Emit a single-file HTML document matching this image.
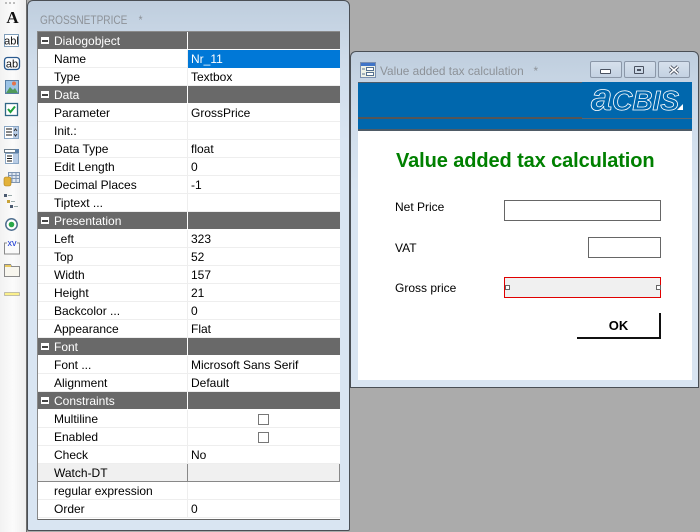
<!DOCTYPE html>
<html><head><meta charset="utf-8">
<style>
html,body{margin:0;padding:0}
body{width:700px;height:532px;overflow:hidden;position:relative;background:#ababab;font-family:"Liberation Sans",sans-serif;font-size:12px;color:#000}
.abs{position:absolute}
#bar{left:0;top:0;width:26px;height:532px;background:linear-gradient(90deg,#f2f2f2,#fbfbfb 50%,#eeeeee)}
#bar2{left:26px;top:0;width:1px;height:532px;background:#6e6e6e}
.win{position:absolute;box-sizing:border-box;border:1px solid #4a4f55;border-radius:6px 6px 0 0;background:linear-gradient(180deg,#bfcede 0,#cfdcea 60px,#d9e5f2 140px,#d9e5f2)}
#w1{left:27px;top:0;width:323px;height:531px;border-radius:6px 6px 2px 2px}
#w2{left:350px;top:51px;width:349px;height:337px;border-radius:6px 6px 0 0}
.ttl{position:absolute;color:#8d9298;font-size:12px;white-space:pre;transform-origin:0 0}
#grid{left:37px;top:32px;width:303px;height:487px;background:#fff;border-top:1px solid #8a8a8a;margin-top:-1px;border-bottom:1px solid #666;box-sizing:content-box}
#gridl{left:37px;top:32px;width:1px;height:488px;background:#888}
.r{position:absolute;left:0;width:303px;height:18px;line-height:17px;box-sizing:border-box;border-bottom:1px solid #eeeeee;white-space:pre}
.r b{font-weight:normal;position:absolute;left:17px;top:1px}
.r i{font-style:normal;position:absolute;left:154px;top:1px;color:#000;height:17px}
.r:after{content:"";position:absolute;left:150px;top:0;width:1px;height:18px;background:#eeeeee}
.h{background:#696969;color:#fff;border-bottom:1px solid #fff}
.h:after{background:#fff}
.h u{position:absolute;left:4px;top:5px;width:8px;height:7px;background:#fff;text-decoration:none}
.h u:after{content:"";position:absolute;left:1px;top:3px;width:6px;height:2px;background:#444}
.sel{position:absolute;left:151px;top:0;width:152px;height:18px;background:#0078d7}
.cb{position:absolute;left:221px;top:4px;width:9px;height:9px;border:1px solid #777;background:#fff}
.wd{background:#f0f0f0}
#client{left:358px;top:82px;width:334px;height:298px;background:#fff}
.btn{position:absolute;top:61px;width:32px;height:17px;box-sizing:border-box;border:1px solid #8b97a8;border-radius:2px;background:linear-gradient(180deg,#d6e0ec,#c4d2e2)}
.tb{position:absolute;box-sizing:border-box;border:1px solid #666;background:#fff}
.lb{position:absolute;left:395px;white-space:pre}
</style></head><body>

<div class="abs" id="bar"></div>
<div class="abs" id="bar2"></div>
<svg class="abs" style="left:0;top:0" width="26" height="310" viewBox="0 0 26 310" xmlns="http://www.w3.org/2000/svg">
<g fill="#bdbdbd"><rect x="5" y="2" width="2" height="2"/><rect x="9" y="2" width="2" height="2"/><rect x="13" y="2" width="2" height="2"/></g>
<text x="12.5" y="23" text-anchor="middle" font-family="Liberation Serif" font-weight="bold" font-size="17" fill="#111">A</text>
<rect x="4.500" y="34.500" width="14" height="12" fill="#fff" stroke="#7f9db9"/>
<text x="11.500" y="44.500" text-anchor="middle" font-size="11" font-family="Liberation Sans" fill="#111">abl</text>
<rect x="4.500" y="57.500" width="15" height="12" rx="3" fill="#fff" stroke="#2a5a8f" stroke-width="1.300"/>
<text x="12" y="67.500" text-anchor="middle" font-size="11" font-family="Liberation Sans" fill="#111">ab</text>
<rect x="5.500" y="80.500" width="13" height="13" fill="#9cc3e6" stroke="#5a7fa5"/>
<path d="M6 93l4-6 3 3 2-2 3 5z" fill="#4f9a5a"/><circle cx="14" cy="83.500" r="2" fill="#e4734a"/>
<rect x="5.500" y="103.500" width="12" height="12" fill="#fff" stroke="#2f6785" stroke-width="1.300"/>
<path d="M8 109l2.500 3 4.500-5.500" fill="none" stroke="#1fa03a" stroke-width="2"/>
<rect x="4.500" y="126.500" width="14" height="12" fill="#fff" stroke="#8aa6c4"/>
<rect x="13" y="127" width="5" height="11" fill="#b9cde6"/>
<path d="M6 129h6M6 132h6M6 135h6" stroke="#111"/>
<path d="M14 131l1.500-2 1.500 2M14 134l1.500 2 1.500-2" stroke="#333" fill="none"/>
<rect x="4.500" y="149.500" width="14" height="3" fill="#fff" stroke="#6d7d8c"/>
<rect x="15" y="149" width="4" height="4" fill="#5b7fa8"/>
<rect x="5.500" y="153.500" width="13" height="10" fill="#fff" stroke="#8aa6c4"/>
<rect x="13" y="154" width="5" height="9" fill="#b9cde6"/>
<path d="M7 156h5M7 158.500h5M7 161h5" stroke="#111"/>
<rect x="8.500" y="172.500" width="11" height="10" fill="#dfe7f1" stroke="#7f95b2"/>
<path d="M8 175.500h12M8 178.500h12M12 172v10M16 172v10" stroke="#7f95b2"/>
<rect x="4" y="177" width="7" height="9" rx="2" fill="#e3b23a" stroke="#a87d1a" stroke-width=".6"/>
<rect x="4" y="194" width="3" height="3" fill="#4a5a70"/><path d="M8 195.500h4" stroke="#9aa"/>
<rect x="7" y="200" width="3" height="3" fill="#c8a33a"/><path d="M11 201.500h4" stroke="#9aa"/>
<rect x="10" y="205" width="3" height="3" fill="#4a5a70"/><path d="M14 206.500h4" stroke="#9aa"/>
<circle cx="11.500" cy="224.500" r="5.700" fill="#fff" stroke="#4f6f8f" stroke-width="1.500"/>
<circle cx="11.500" cy="224.500" r="2.800" fill="#2aa84a"/>
<path d="M7 243h-2.500v11h15v-11h-2.500" fill="#fafafa" stroke="#8a8a8a"/>
<text x="12" y="246" text-anchor="middle" font-size="9" font-family="Liberation Sans" fill="#1030d0">xv</text>
<path d="M4.500 264.500h6l1 2h8v10h-15z" fill="#f8f6ee" stroke="#8a8a8a"/>
<rect x="5" y="265" width="6" height="2" fill="#e8c860"/>
<rect x="4.500" y="292.500" width="15" height="3" fill="#fbf08c" stroke="#8a8a8a" stroke-dasharray="1 1"/>
</svg>

<div class="win" id="w1"></div>
<div class="ttl" style="left:40px;top:13px;transform:scaleX(.84)">GROSSNETPRICE    *</div>

<div class="abs" id="grid">
<div class="r h" style="top:0"><u></u><b>Dialogobject</b></div>
<div class="r" style="top:18px"><div class="sel"></div><b>Name</b><i style="color:#fff">Nr_11</i></div>
<div class="r" style="top:36px"><b>Type</b><i>Textbox</i></div>
<div class="r h" style="top:54px"><u></u><b>Data</b></div>
<div class="r" style="top:72px"><b>Parameter</b><i>GrossPrice</i></div>
<div class="r" style="top:90px"><b>Init.:</b></div>
<div class="r" style="top:108px"><b>Data Type</b><i>float</i></div>
<div class="r" style="top:126px"><b>Edit Length</b><i>0</i></div>
<div class="r" style="top:144px"><b>Decimal Places</b><i>-1</i></div>
<div class="r" style="top:162px"><b>Tiptext ...</b></div>
<div class="r h" style="top:180px"><u></u><b>Presentation</b></div>
<div class="r" style="top:198px"><b>Left</b><i>323</i></div>
<div class="r" style="top:216px"><b>Top</b><i>52</i></div>
<div class="r" style="top:234px"><b>Width</b><i>157</i></div>
<div class="r" style="top:252px"><b>Height</b><i>21</i></div>
<div class="r" style="top:270px"><b>Backcolor ...</b><i>0</i></div>
<div class="r" style="top:288px"><b>Appearance</b><i>Flat</i></div>
<div class="r h" style="top:306px"><u></u><b>Font</b></div>
<div class="r" style="top:324px"><b>Font ...</b><i>Microsoft Sans Serif</i></div>
<div class="r" style="top:342px"><b>Alignment</b><i>Default</i></div>
<div class="r h" style="top:360px"><u></u><b>Constraints</b></div>
<div class="r" style="top:378px"><b>Multiline</b><span class="cb"></span></div>
<div class="r" style="top:396px"><b>Enabled</b><span class="cb"></span></div>
<div class="r" style="top:414px"><b>Check</b><i>No</i></div>
<div class="r wd" style="top:432px;border-bottom:1px solid #888;border-right:1px solid #888"><b>Watch-DT</b></div>
<div class="abs" style="left:150px;top:432px;width:1px;height:18px;background:#888"></div>
<div class="r" style="top:450px"><b>regular expression</b></div>
<div class="r" style="top:468px"><b>Order</b><i>0</i></div>
</div>
<div class="abs" id="gridl"></div>

<div class="win" id="w2"></div>
<svg class="abs" style="left:360px;top:62px" width="16" height="16" viewBox="0 0 16 16">
<rect x=".5" y=".5" width="15" height="15" fill="#eef1e6" stroke="#7a8fb0"/>
<rect x="1" y="1" width="14" height="3" fill="#3f74c8"/>
<rect x="6.500" y="5.500" width="7" height="3" fill="#fff" stroke="#55708f"/>
<rect x="6.500" y="10.500" width="7" height="3" fill="#fff" stroke="#55708f"/>
<path d="M2 7h3M2 12h3" stroke="#55708f"/>
</svg>
<div class="ttl" style="left:380px;top:64px;transform:scaleX(.985)">Value added tax calculation   *</div>
<div class="btn" style="left:590px"><div class="abs" style="left:9px;top:7px;width:11px;height:5px;border:1px solid #4a5160;border-radius:1px;background:#fff;box-sizing:border-box"></div></div>
<div class="btn" style="left:624px"><div class="abs" style="left:9px;top:4px;width:10px;height:8px;border:1px solid #4a5160;border-radius:1px;box-sizing:border-box"><div style="margin:2px 2px;height:2px;border:1px solid #4a5160;box-sizing:content-box;height:0"></div></div></div>
<div class="btn" style="left:658px"><svg class="abs" style="left:9px;top:3px" width="12" height="10" viewBox="0 0 12 10"><path d="M2 1.500l8 7M10 1.500l-8 7" stroke="#4a5160" stroke-width="3.400"/><path d="M2 1.500l8 7M10 1.500l-8 7" stroke="#fff" stroke-width="1.500"/></svg></div>

<div class="abs" id="client"></div>
<div class="abs" style="left:358px;top:82px;width:334px;height:48px;background:#0067ad"></div>
<div class="abs" style="left:358px;top:82px;width:224px;height:1px;background:#4d5c6a"></div>
<div class="abs" style="left:358px;top:117px;width:224px;height:2px;background:#555"></div>
<div class="abs" style="left:582px;top:118px;width:110px;height:1px;background:#5a6670"></div>
<div class="abs" style="left:358px;top:129px;width:334px;height:2px;background:#4f5b66"></div>
<svg class="abs" style="left:588px;top:84px" width="100" height="30" viewBox="0 0 100 30">
<text x="3" y="26" font-family="Liberation Sans" font-weight="bold" font-style="italic" font-size="28" fill="none" stroke="#fff" stroke-width=".8" textLength="88" lengthAdjust="spacingAndGlyphs"><tspan font-size="38">a</tspan>CBIS</text>
<path d="M95 26V20l-6 6z" fill="#fff"/>
</svg>

<div class="abs" style="left:396px;top:150px;font-size:20px;letter-spacing:-.1px;font-weight:bold;color:#008000;white-space:pre;line-height:23px">Value added tax calculation</div>

<div class="lb" style="top:200px">Net Price</div>
<div class="lb" style="top:241px">VAT</div>
<div class="lb" style="top:281px">Gross price</div>
<div class="tb" style="left:504px;top:200px;width:157px;height:21px"></div>
<div class="tb" style="left:588px;top:237px;width:73px;height:21px"></div>
<div class="tb" style="left:504px;top:277px;width:157px;height:21px;background:#f0f0f0;border-color:#e00000"></div>
<div class="abs" style="left:505px;top:285px;width:3px;height:3px;border:1px solid #666;background:#fff"></div>
<div class="abs" style="left:656px;top:285px;width:3px;height:3px;border:1px solid #666;background:#fff"></div>
<div class="abs" style="left:577px;top:313px;width:84px;height:26px;box-sizing:border-box;border-right:2px solid #111;border-bottom:2px solid #111;text-align:center;font-weight:bold;font-size:13px;line-height:26px;padding-left:1px">OK</div>
</body></html>
